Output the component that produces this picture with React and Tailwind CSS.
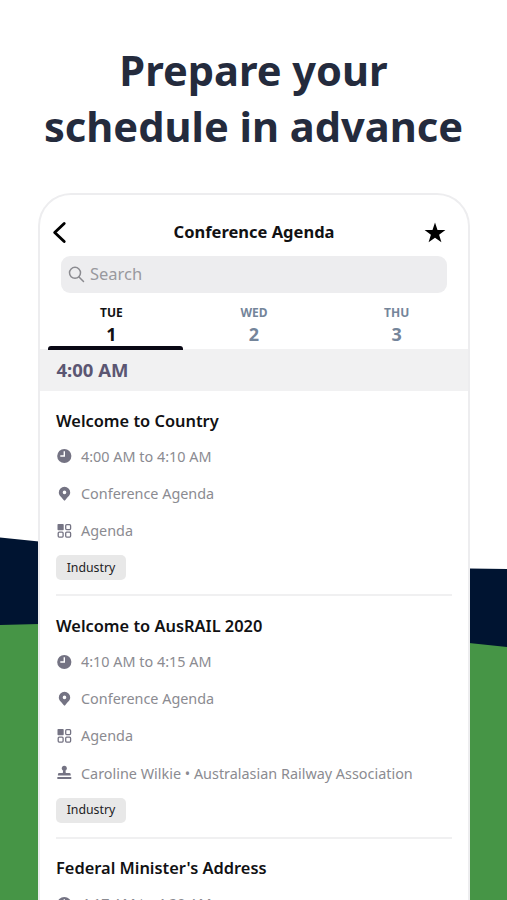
import React from "react";

const days = [
    { name: "TUE", date: 1, active: true },
    { name: "WED", date: 2, active: false },
    { name: "THU", date: 3, active: false },
];

const sessions = [
    {
        title: "Welcome to Country",
        time: "4:00 AM to 4:10 AM",
        location: "Conference Agenda",
        track: "Agenda",
        tag: "Industry",
    },
    {
        title: "Welcome to AusRAIL 2020",
        time: "4:10 AM to 4:15 AM",
        location: "Conference Agenda",
        track: "Agenda",
        speaker: "Caroline Wilkie • Australasian Railway Association",
        tag: "Industry",
    },
    {
        title: "Federal Minister's Address",
        time: "4:17 AM to 4:20 AM",
    },
];

const ClockIcon = () => (
    <svg viewBox="0 0 16 16" className="w-4 h-4 shrink-0">
        <circle cx="8.3" cy="8" r="7.1" fill="#747383" />
        <path d="M8.3 3.2V8H4.3" fill="none" stroke="#fff" strokeWidth="1.4" />
    </svg>
);

const PinIcon = () => (
    <svg viewBox="0 0 16 16" className="w-4 h-4 shrink-0">
        <path
            fill="#747383"
            fillRule="evenodd"
            d="M8.500 .8a5.700 5.700 0 0 0-5.700 5.700c0 3.500 3.400 4.900 4.600 7.300.5 1.100 1.700 1.100 2.200 0 1.200-2.400 4.600-3.800 4.600-7.300A5.700 5.700 0 0 0 8.500 .8Zm0 3.800a1.800 1.800 0 1 1 0 3.600 1.800 1.800 0 0 1 0-3.600Z"
        />
    </svg>
);

const GridIcon = () => (
    <svg viewBox="0 0 16 16" className="w-4 h-4 shrink-0" fill="none" stroke="#747383" strokeWidth="1.3">
        <rect x="1.500" y="1" width="6.200" height="6.200" rx=".8" fill="#747383" stroke="none" />
        <rect x="9.700" y="1.700" width="4.900" height="4.900" rx="1" />
        <rect x="2.200" y="9.200" width="4.900" height="4.900" rx="1" />
        <rect x="9.700" y="9.200" width="4.900" height="4.900" rx="1" />
    </svg>
);

const SpeakerIcon = () => (
    <svg viewBox="0 0 16 16" className="w-4 h-4 shrink-0" fill="#747383">
        <circle cx="8.300" cy="3.200" r="2.500" />
        <path d="M7.200 5h2.200l.4 3h3.500q1.400 0 1.400 1.400v1H1.900v-1Q1.900 8 3.300 8h3.500Z" />
        <rect x="1.300" y="11.900" width="14" height="2.200" rx=".5" />
    </svg>
);

const DetailRow = ({ icon, children }) => (
    <div className="flex items-center h-[37.25px] gap-[9px] text-[14.4px] text-[#8b8b91] whitespace-nowrap">
        {icon}
        <span>{children}</span>
    </div>
);

const SessionCard = ({ session }) => (
    <div className="ml-4 mr-4 pt-[10.5px] pb-[14.2px] border-b-2 border-[#f0f0f1]">
        <h3 className="h-[36.2px] leading-[37px] text-[16.4px] font-semibold text-[#111113] whitespace-nowrap">
            {session.title}
        </h3>
        <DetailRow icon={<ClockIcon />}>{session.time}</DetailRow>
        {session.location && (
            <DetailRow icon={<PinIcon />}>{session.location}</DetailRow>
        )}
        {session.track && (
            <DetailRow icon={<GridIcon />}>{session.track}</DetailRow>
        )}
        {session.speaker && (
            <DetailRow icon={<SpeakerIcon />}>{session.speaker}</DetailRow>
        )}
        {session.tag && (
            <div className="mt-[5.7px] w-[70px] h-[25px] pt-px rounded-[5px] bg-[#e8e8e8] flex items-center justify-center text-[12.3px] text-[#222224]">
                {session.tag}
            </div>
        )}
    </div>
);

// Navy and green waves behind the phone
const Backdrop = () => (
    <svg viewBox="0 0 507 900" className="absolute inset-0 w-[507px] h-[900px]">
        <path d="M0 537.500L39 541.500L250 560L469 568.500L507 569V900H0Z" fill="#001431" />
        <path d="M0 625L39 624L250 626L469 643L507 647V900H0Z" fill="#469546" />
    </svg>
);

const App = () => {
    return (
        <div className="relative w-[507px] h-[900px] overflow-hidden bg-white font-['Noto_Sans','Open_Sans',sans-serif]">
            <Backdrop />
            <div className="relative">
                <h1 className="h-[193px] pt-[42px] text-center text-[41.6px] leading-[56px] font-bold text-[#242b3d] whitespace-nowrap">
                    Prepare your
                    <br />
                    schedule in advance
                </h1>

                <div className="ml-[38px] w-[432px] h-[760px] overflow-hidden rounded-t-[33px] border-2 border-b-0 border-[#ededef] bg-white bg-clip-padding">
                    {/* Top bar */}
                    <div className="grid grid-cols-[40px_1fr_40px] items-center h-[61px] pt-[14px] pl-[11px] pr-[11px]">
                        <svg viewBox="0 0 16 24" className="w-4 h-6">
                            <path d="M13.200 2.500L3.700 11.500L13.200 20.500" fill="none" stroke="#000" strokeWidth="2.900" strokeLinecap="round" strokeLinejoin="round" />
                        </svg>
                        <h2 className="text-center text-[16.5px] font-bold text-[#111113]">Conference Agenda</h2>
                        <svg viewBox="0 0 22 22" className="w-[22px] h-[22px] ml-[7px]">
                            <path d="M11 .6L13.500 8H21.400L15.100 12.700L17.400 20.300L11 15.700L4.600 20.300L6.900 12.700L.6 8H8.500Z" fill="#000" />
                        </svg>
                    </div>

                    {/* Search */}
                    <div className="flex items-center gap-[5px] mx-[21px] h-[37px] pl-[7px] rounded-[9px] bg-[#ededef] text-[16.5px] text-[#99999e]">
                        <svg viewBox="0 0 17 17" className="w-[17px] h-[17px]" fill="none" stroke="#8b8b90" strokeWidth="1.500" strokeLinecap="round">
                            <circle cx="7" cy="6.800" r="5.500" />
                            <path d="M11 11L15.500 15.500" />
                        </svg>
                        <span>Search</span>
                    </div>

                    {/* Day tabs */}
                    <div className="grid grid-cols-3 h-[56px]">
                        {days.map((day) => (
                            <div
                                key={day.name}
                                className={`flex flex-col items-center pt-3 ${
                                    day.active ? "text-[#111113]" : "text-[#74859a]"
                                }`}
                            >
                                <span className="text-[12px] leading-4 font-bold">{day.name}</span>
                                <span className="h-[25px] text-[18px] leading-[26px] font-bold">{day.date}</span>
                                {day.active && (
                                    <div className="self-start ml-2 w-[135px] h-1 shrink-0 rounded-t-[3px] bg-[#090814]" />
                                )}
                            </div>
                        ))}
                    </div>

                    <div className="h-[42px] pl-[16.500px] bg-[#f1f1f2] text-[18.500px] leading-[42px] font-bold text-[#5b5672]">
                        4:00 AM
                    </div>

                    {sessions.map((session) => (
                        <SessionCard key={session.title} session={session} />
                    ))}
                </div>
            </div>
        </div>
    );
};

export default App;
